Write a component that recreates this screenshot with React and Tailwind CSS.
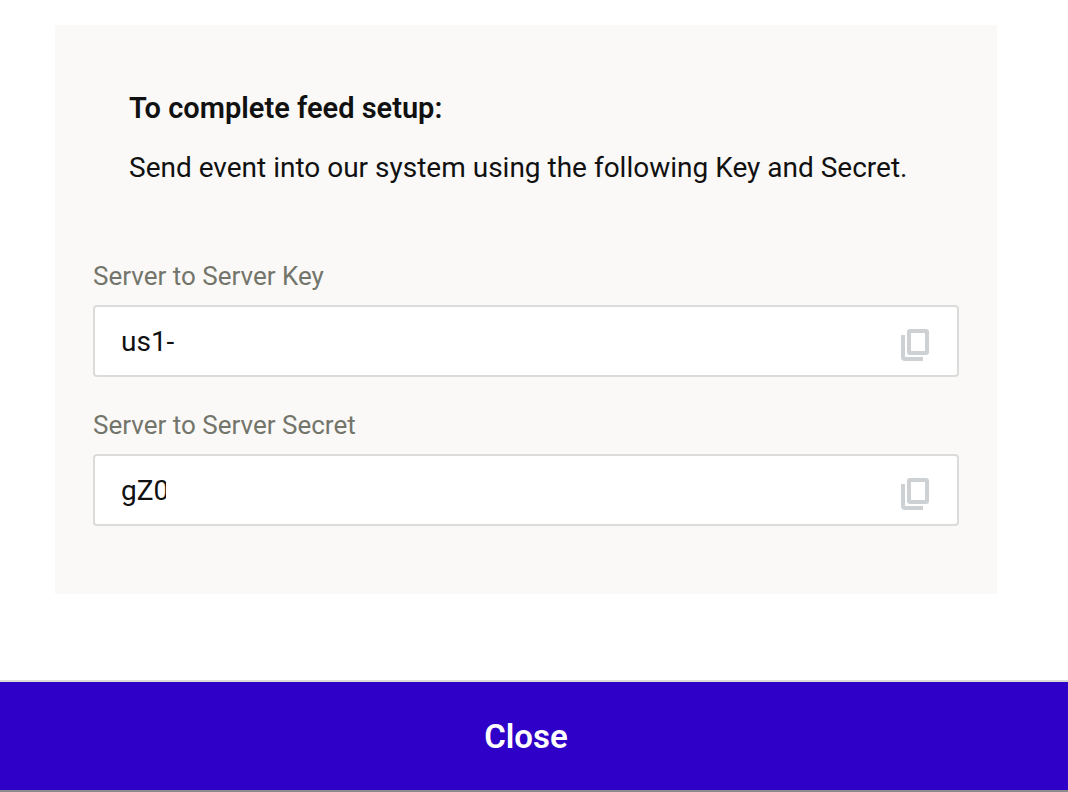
import React from 'react';

const CopyIcon = () => (
  <svg width="28" height="32" viewBox="0 0 28 32" fill="none" stroke="#cdd1d4" strokeWidth="4" aria-hidden="true">
    <rect x="8" y="2" width="18" height="22" rx="1" />
    <path d="M2 6V28Q2 30 4 30H22" />
  </svg>
);

const KeyField = ({ id, label, value, inputClassName }) => {
  const copyValue = () => navigator.clipboard?.writeText(value);

  return (
    <div>
      <label htmlFor={id} className="block text-[26px] leading-8 text-[#73756b]">
        {label}
      </label>
      <div className="mt-[13px] flex h-[72px] items-center justify-between rounded border-2 border-[#dbdcda] bg-white pl-[26px] pr-7">
        <input
          id={id}
          type="text"
          readOnly
          value={value}
          className={`h-10 bg-transparent pt-0.5 text-[28px] leading-10 text-[#111111] outline-none ${inputClassName}`}
        />
        <button type="button" aria-label={`Copy ${label}`} onClick={copyValue} className="pt-2">
          <CopyIcon />
        </button>
      </div>
    </div>
  );
};

const App = () => {
  return (
    <div className="flex min-h-screen flex-col bg-white font-['Roboto','Liberation_Sans',sans-serif] text-[#111111]">
      <main className="grow pl-[55px] pr-[71px] pt-[25px] pb-[86px]">
        <section className="bg-[#faf9f7] px-[38px] pt-[65px] pb-[68px]">
          <div className="px-9">
            <h1 className="text-[29px] leading-9 font-semibold">To complete feed setup:</h1>
            <p className="mt-6 text-[28px] leading-9">
              Send event into our system using the following Key and Secret.
            </p>
          </div>

          <div className="mt-[74px] flex flex-col gap-8">
            <KeyField id="server-key" label="Server to Server Key" value="us1-" inputClassName="w-3/4" />
            <KeyField id="server-secret" label="Server to Server Secret" value="gZ0" inputClassName="w-[45px]" />
          </div>
        </section>
      </main>

      <button
        type="button"
        className="h-28 w-full border-t-2 border-b-2 border-t-[#dcdcd6] border-b-[#8c8c8c] bg-[#2f00c7] pt-0.5 pr-4 text-[33px] font-semibold text-white"
      >
        Close
      </button>
    </div>
  );
};

export default App;
